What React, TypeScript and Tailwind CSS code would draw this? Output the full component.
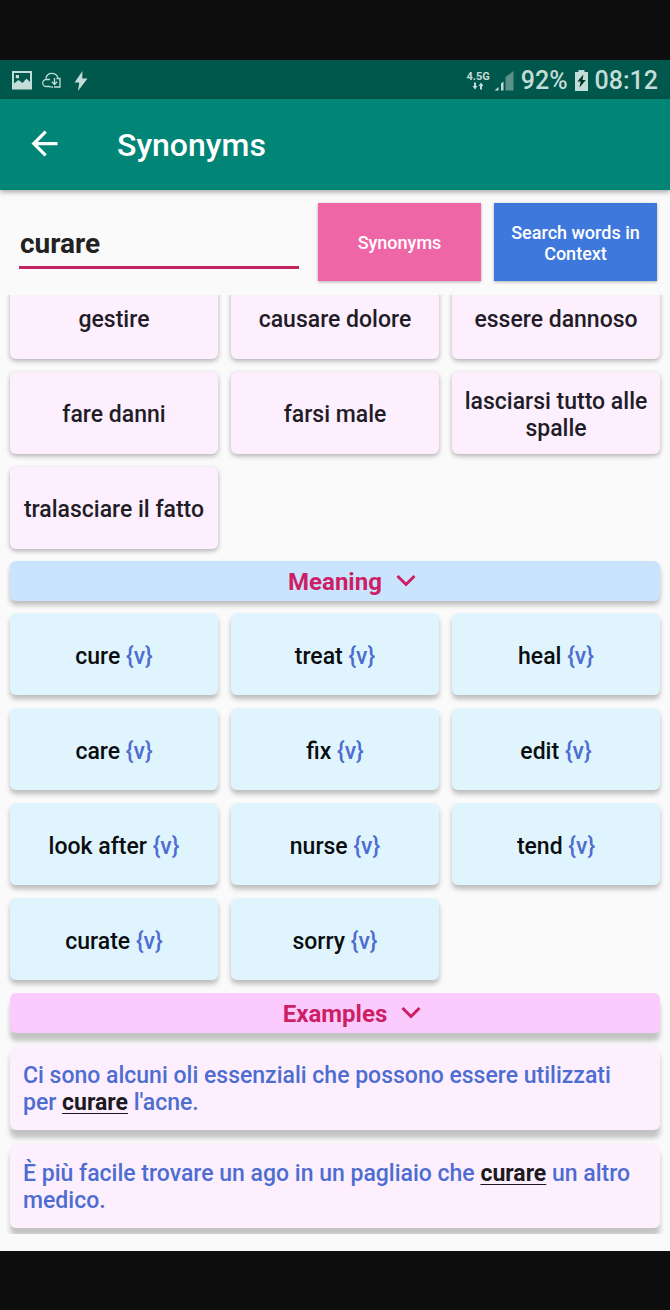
import type { ReactNode } from "react";

const synonyms = [
  "gestire",
  "causare dolore",
  "essere dannoso",
  "fare danni",
  "farsi male",
  "lasciarsi tutto alle spalle",
  "tralasciare il fatto",
];

const meanings = [
  "cure",
  "treat",
  "heal",
  "care",
  "fix",
  "edit",
  "look after",
  "nurse",
  "tend",
  "curate",
  "sorry",
];

function StatusBar() {
  return (
    <div className="flex h-[39px] items-center justify-between bg-[#00574b] px-3 pt-[2px] text-[#c3dcd7]">
      <div className="flex items-center gap-[10px]">
        <svg width="20" height="20" viewBox="0 0 20 20" aria-hidden="true">
          <path
            fill="currentColor"
            fillRule="evenodd"
            d="M0 0h20v18.500H0zM2 2v10.500l4.500-3.500 4 3 4-4.500L18 11V2zM3.800 4h3.200v3.200H3.800z"
          />
        </svg>
        <svg width="20" height="20" viewBox="0 0 20 20" fill="none" stroke="currentColor" strokeWidth="1.300" aria-hidden="true">
          <path d="M8 15.500H4.500a3.500 3.500 0 0 1-.5-7H8M3.800 7.500C4.500 4 7 2.300 9.800 2.300S15 4 15.800 6.500M8 15.500a4 4 0 0 0 3 .5M14.500 7.500h3.500v8.500h-6M12.500 7V13M10 10.800l2.500 2.700 2.500-2.700" />
        </svg>
        <svg width="18" height="20" viewBox="0 0 18 20" aria-hidden="true">
          <path fill="currentColor" d="M10.500 0 2.500 11.500h4.800L6 20 15.500 7.500h-5.300z" />
        </svg>
      </div>
      <div className="flex items-center gap-[7px]">
        <div className="flex items-center gap-1">
          <div className="flex flex-col items-center">
            <span className="text-[11px] leading-[11px] font-bold">4.5G</span>
            <svg width="12" height="8" viewBox="0 0 12 8" fill="currentColor" aria-hidden="true">
              <path d="M2 .5h2V4h1.500L3 7.500.5 4H2zM8 7.500h2V4h1.500L9 .5 6.500 4H8z" />
            </svg>
          </div>
          <svg width="20" height="22" viewBox="0 0 20 22" fill="currentColor" aria-hidden="true">
            <path d="M4.500 17v3.500H.5zM9.500 11.500v9H7v-7z" />
            <path opacity="0.450" d="M19.500 1v19.500h-8V7z" />
          </svg>
        </div>
        <span className="text-[25px] leading-[28px] font-medium">92%</span>
        <svg width="13" height="21" viewBox="0 0 13 21" aria-hidden="true">
          <path fill="currentColor" d="M3.500 0h6v2H13v19H0V2h3.500z" />
          <path fill="#00352d" d="M8.500 4.500 2.300 11.500h3.300L4.500 17.500l6.300-7.500H7.500z" />
        </svg>
        <span className="text-[25px] leading-[28px] font-medium">08:12</span>
      </div>
    </div>
  );
}

function AppBar() {
  return (
    <header className="relative flex h-[91px] items-center bg-[#008577] pl-[25px] text-white shadow-[0_2px_5px_rgba(0,0,0,0.350)]">
      <button type="button" aria-label="Back" className="-mt-[2px] mr-[53px]">
        <svg width="39" height="39" viewBox="0 0 24 24" fill="currentColor" aria-hidden="true">
          <path d="M20 11H7.830l5.590-5.590L12 4l-8 8 8 8 1.410-1.410L7.830 13H20v-2z" />
        </svg>
      </button>
      <h1 className="text-[32px] leading-[40px] font-medium">Synonyms</h1>
    </header>
  );
}

function SearchRow() {
  return (
    <form className="flex gap-[13px] px-[13px] pt-[13px] pb-[14px]" onSubmit={(event) => event.preventDefault()}>
      <div className="flex min-w-0 flex-1 items-center px-[6px]">
        <input
          type="text"
          aria-label="Word"
          defaultValue="curare"
          className="h-[53px] w-full min-w-0 border-b-[3px] border-[#c2255f] pt-[6px] pl-px text-[28px] font-bold text-[#222222] outline-none"
        />
      </div>
      <button
        type="submit"
        className="h-[78px] w-[163px] bg-[#ef66a6] text-[18px] leading-[21px] font-medium text-white shadow-[0_1px_3px_rgba(0,0,0,0.300)]"
      >
        Synonyms
      </button>
      <button
        type="button"
        className="h-[78px] w-[163px] bg-[#3f78dc] px-3 pt-[2px] text-[18px] leading-[21px] font-medium text-white shadow-[0_1px_3px_rgba(0,0,0,0.300)]"
      >
        Search words in Context
      </button>
    </form>
  );
}

function SectionHeader({ title, className }: { title: string; className: string }) {
  return (
    <button
      type="button"
      className={`grid h-10 w-full grid-cols-[1fr_auto_1fr] items-center gap-3 rounded-[6px] text-[24px] leading-[28px] font-bold text-[#cc1f66] ${className}`}
    >
      <h2 className="col-start-2 pt-[2px]">{title}</h2>
      <svg width="24" height="24" viewBox="0 0 24 24" fill="none" stroke="currentColor" strokeWidth="3" aria-hidden="true">
        <path d="m3.500 7 8.500 8.500L20.500 7" />
      </svg>
    </button>
  );
}

function Example({ children }: { children: ReactNode }) {
  return (
    <p className="flex min-h-[85px] items-center rounded-[6px] bg-[#fdeffe] px-[13px] pt-[3px] text-[23px] leading-[27px] font-medium text-[#4d6dd0] shadow-[0_8px_5px_rgba(0,0,0,0.220)]">
      <span>{children}</span>
    </p>
  );
}

function Keyword() {
  return <b className="font-bold text-[#1c1a20] underline decoration-1 underline-offset-3">curare</b>;
}

export default function App() {
  return (
    <div className="flex min-h-screen flex-col bg-[#0d0d0d] pt-[60px] pb-[59px] font-['Roboto',sans-serif]">
      <StatusBar />
      <div className="flex flex-1 flex-col bg-[#fafafa]">
        <AppBar />
        <SearchRow />
        <main className="overflow-hidden px-[10px] pb-[6px]">
          <ul className="-mt-[18px] grid grid-cols-3 gap-[13px]">
            {synonyms.map((word) => (
              <li
                key={word}
                className="flex h-[82px] items-center justify-center rounded-[6px] bg-[#fdeffe] px-2 pt-[3px] text-center text-[23px] leading-[27px] font-medium text-[#211c26] shadow-[0_2px_5px_rgba(0,0,0,0.300)]"
              >
                {word}
              </li>
            ))}
          </ul>
          <SectionHeader title="Meaning" className="mt-3 bg-[#cae4fe] shadow-[0_4px_5px_rgba(0,0,0,0.250)]" />
          <ul className="mt-3 grid grid-cols-3 gap-[13px]">
            {meanings.map((word) => (
              <li
                key={word}
                className="flex h-[82px] items-center justify-center rounded-[6px] bg-[#e0f4fe] px-2 pt-[4px] text-center text-[23px] leading-[27px] font-medium text-[#090d10] shadow-[0_4px_5px_rgba(0,0,0,0.250)]"
              >
                <span>
                  {word} <span className="text-[#4d6dd0]">{"{v}"}</span>
                </span>
              </li>
            ))}
          </ul>
          <SectionHeader title="Examples" className="mt-[13px] bg-[#fccbfd] shadow-[0_8px_5px_rgba(0,0,0,0.220)]" />
          <div className="mt-3 flex flex-col gap-[13px]">
            <Example>
              Ci sono alcuni oli essenziali che possono essere utilizzati per <Keyword /> l'acne.
            </Example>
            <Example>
              È più facile trovare un ago in un pagliaio che <Keyword /> un altro medico.
            </Example>
          </div>
        </main>
      </div>
    </div>
  );
}
